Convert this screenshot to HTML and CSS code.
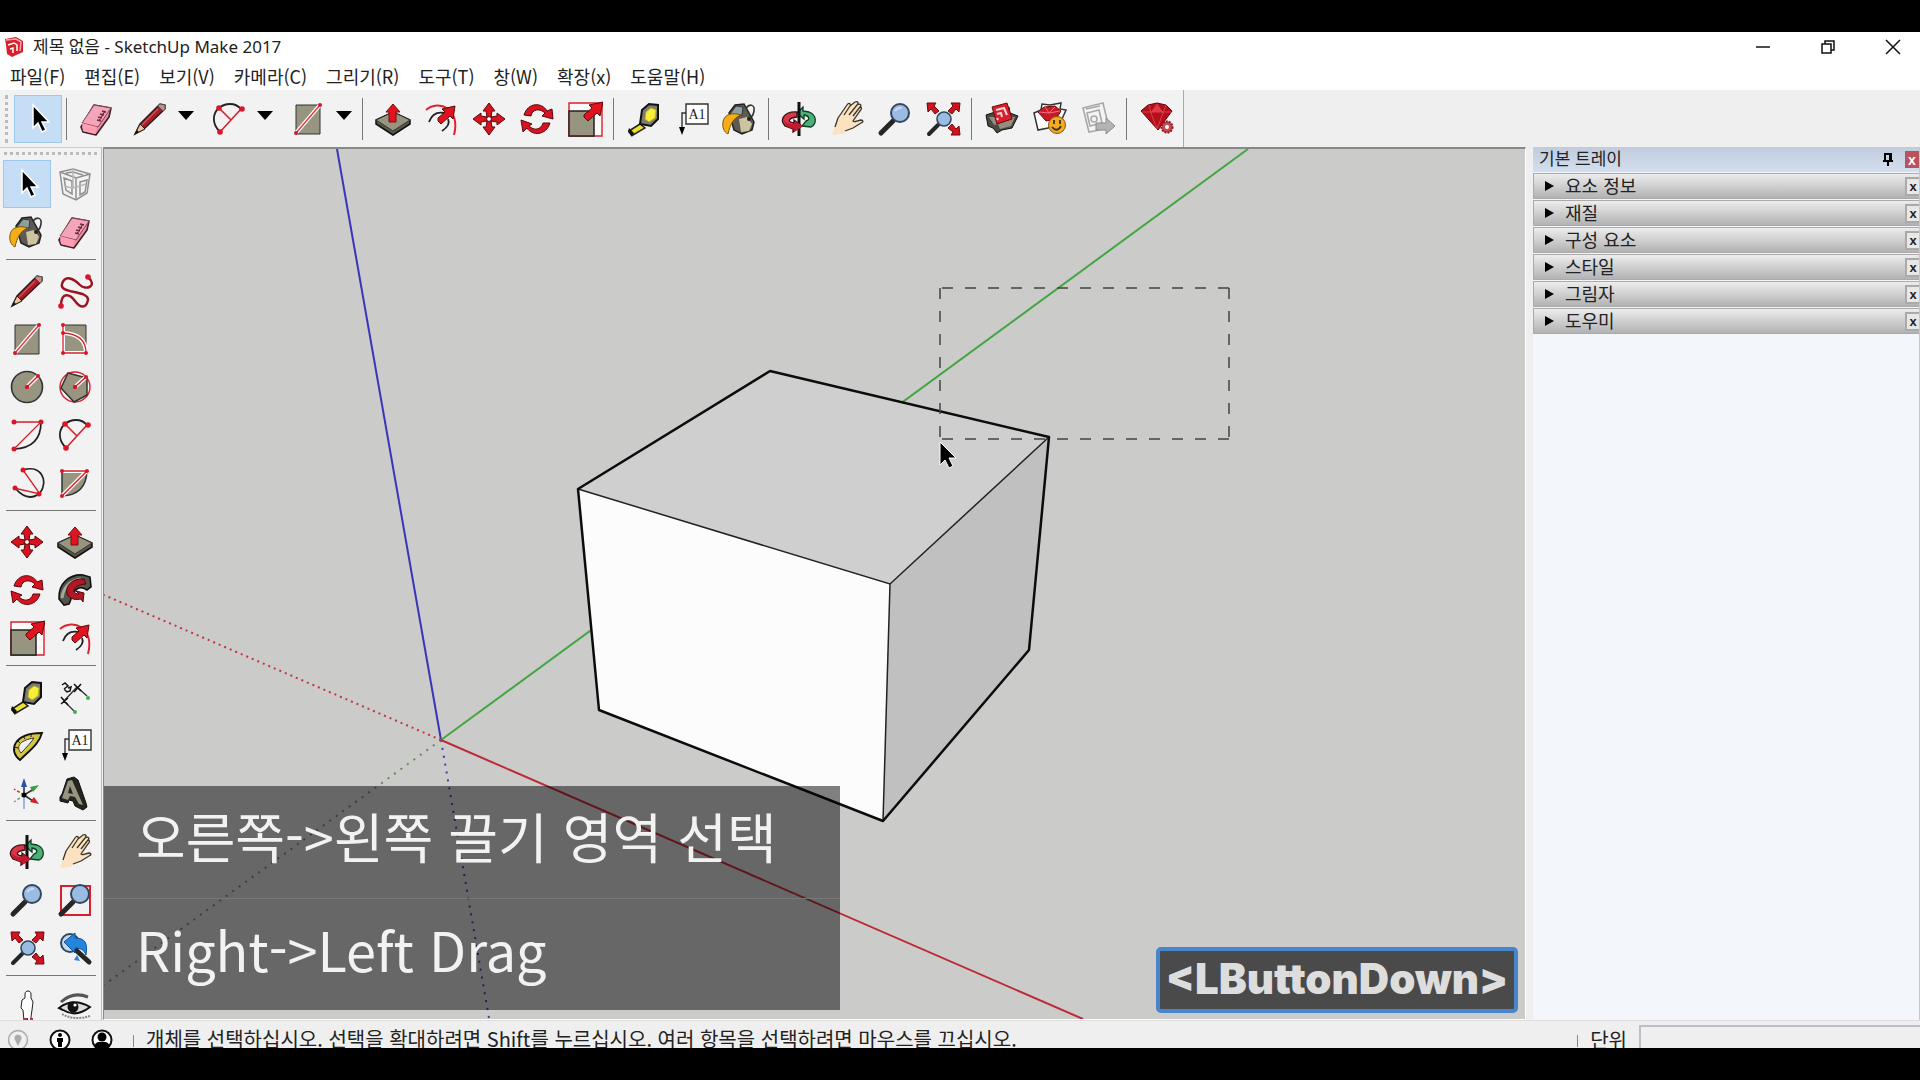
FILE: index.html
```html
<!DOCTYPE html>
<html lang="ko">
<head>
  <meta charset="UTF-8">
  <meta name="viewport" content="width=device-width, initial-scale=1.0">
  <title>제목 없음 - SketchUp Make 2017</title>
  <link rel="stylesheet" href="styles.css">
</head>
<body>
  <!-- Icon set, every symbol sits on a 36 x 36 grid -->
  <svg class="sprite" aria-hidden="true">
    <symbol id="i-select" viewBox="0 0 36 36">
      <path d="M13 4v23l5-5 4 9 4-2-4-8h7z" fill="#000" stroke="#fff" stroke-width="1.5"/>
    </symbol>
    <symbol id="i-eraser" viewBox="0 0 36 36">
      <path d="M2 26 15 4l17 3-2 9-13 18-13-3z" fill="#f08ba2" stroke="#3a2228" stroke-width="1.6" stroke-linejoin="round"/>
      <path d="M3 22 15 4l17 3-13 19z" fill="#f4a5b9" stroke="#7d4453"/>
      <path d="m3 22 15 4-2 7-12-3z" fill="#ff9db2"/>
      <path d="m18 19 4 1m-3-4 4 1m-2-4 4 1m-2-4 4 1m-7 9 6-10" stroke="#6b2b3c" stroke-width="1.3" fill="none"/>
    </symbol>
    <symbol id="i-pencil" viewBox="0 0 36 36">
      <path d="M3 33 8 23 28 3l5 1v4L12 28z" fill="#a91d27" stroke="#2a1a1a" stroke-width="1.4"/>
      <path d="m3 33 5-10 5 5z" fill="#e5c79b" stroke="#2a1a1a"/>
      <path d="m3 33 2-4 2 2z" fill="#111"/>
      <path d="m26 5 2-2 5 1v4l-2 2z" fill="#c98a90" stroke="#555"/>
      <path d="m10 24 16-16" stroke="#d64f57" stroke-width="1.5"/>
    </symbol>
    <symbol id="i-freehand" viewBox="0 0 36 36">
      <path d="M4 33C4 18 13 21 18 28S29 36 31 27C32 17 2 21 5 11S17 6 23 12s18 1 8-8" fill="none" stroke="#9b1220" stroke-width="2.4"/>
      <g fill="#d81628"><circle cx="4" cy="33" r="2.8"/><circle cx="31" cy="4" r="2.8"/></g>
    </symbol>
    <symbol id="i-arc" viewBox="0 0 36 36">
      <path d="M9 31C0 22 2 12 8 7s16-6 22 1" fill="none" stroke="#222" stroke-width="1.8"/>
      <path d="M9 31 30 8M8 7l12 12" fill="none" stroke="#d6212d" stroke-width="1.6"/>
      <g fill="#d81628"><circle cx="8" cy="7" r="2.8"/><circle cx="31" cy="8" r="2.8"/><circle cx="9" cy="31" r="2.8"/></g>
    </symbol>
    <symbol id="i-rect" viewBox="0 0 36 36">
      <path d="M6 4h24v29H6z" fill="#97947f" stroke="#333"/>
      <path d="M6 32 30 4" stroke="#fff" stroke-width="4"/>
      <path d="M6 32 30 4" stroke="#e03c46" stroke-width="1.5"/>
      <g fill="#d81628"><circle cx="6" cy="32" r="2"/><circle cx="30" cy="4" r="2"/></g>
    </symbol>
    <symbol id="i-rotrect" viewBox="0 0 36 36">
      <path d="M6 4h23v28H6z" fill="#97947f" stroke="#333"/>
      <path d="M6 4v28h23q0-19-23-20" fill="none" stroke="#fff" stroke-width="4"/>
      <path d="M6 4v28h23q0-19-23-20" fill="none" stroke="#d6212d" stroke-width="1.3"/>
      <g fill="#d81628"><circle cx="6" cy="4" r="2"/><circle cx="6" cy="12" r="2"/><circle cx="6" cy="32" r="2"/><circle cx="29" cy="32" r="2"/></g>
    </symbol>
    <symbol id="i-circle" viewBox="0 0 36 36">
      <circle cx="18" cy="18" r="15.5" fill="#97947f" stroke="#333" stroke-width="1.6"/>
      <path d="M18 18 29 7" stroke="#fff" stroke-width="4"/><path d="M18 18 29 7" stroke="#d6212d" stroke-width="1.5"/>
      <g fill="#d81628"><circle cx="18" cy="18" r="2.2"/><circle cx="29" cy="7" r="2"/></g>
    </symbol>
    <symbol id="i-polygon" viewBox="0 0 36 36">
      <circle cx="18" cy="18" r="15" fill="none" stroke="#d6212d" stroke-width="1.4"/>
      <path d="m11 4 19 5v17l-13 7L4 19z" fill="#97947f" stroke="#333" stroke-width="1.5"/>
      <path d="M18 18 29 8" stroke="#fff" stroke-width="4"/><path d="M18 18 29 8" stroke="#d6212d" stroke-width="1.5"/>
      <g fill="#d81628"><circle cx="18" cy="18" r="2.2"/><circle cx="29" cy="8" r="2"/></g>
    </symbol>
    <symbol id="i-arc2" viewBox="0 0 36 36">
      <path d="M32 5q0 26-27 27" fill="none" stroke="#222" stroke-width="1.7"/>
      <path d="M5 5h27L5 32" fill="none" stroke="#d6212d" stroke-width="1.3"/>
      <g fill="#d81628"><circle cx="5" cy="5" r="2.5"/><circle cx="32" cy="5" r="2.5"/><circle cx="5" cy="32" r="2.5"/></g>
    </symbol>
    <symbol id="i-arc3" viewBox="0 0 36 36">
      <path d="M14 5C32-1 40 16 31 28q-12 10-25-5" fill="none" stroke="#222" stroke-width="1.7"/>
      <path d="m14 5 17 24L5 23" fill="none" stroke="#d6212d" stroke-width="1.3"/>
      <g fill="#d81628"><circle cx="14" cy="5" r="2.5"/><circle cx="30" cy="29" r="2.5"/><circle cx="6" cy="23" r="2.5"/></g>
    </symbol>
    <symbol id="i-pie" viewBox="0 0 36 36">
      <path d="M5 6h25Q29 30 5 31z" fill="#97947f" stroke="#333" stroke-width="1.5"/>
      <path d="M5 31 30 6H5" fill="none" stroke="#fff" stroke-width="4"/>
      <path d="M5 31 30 6H5" fill="none" stroke="#d6212d" stroke-width="1.5"/>
      <g fill="#d81628"><circle cx="5" cy="6" r="2"/><circle cx="30" cy="6" r="2"/><circle cx="5" cy="31" r="2"/></g>
    </symbol>
    <symbol id="i-push" viewBox="0 0 36 36">
      <path d="m1 19 17-8 17 8v4L18 34 1 23z" fill="#56564a" stroke="#111" stroke-width="1.5"/>
      <path d="m1 19 17-8 17 8-17 11z" fill="#97947f" stroke="#333"/>
      <path d="M14 21V11h-3l7-8 7 8h-4v10z" fill="#e0141f" stroke="#7a0c12"/>
    </symbol>
    <symbol id="i-offset" viewBox="0 0 36 36">
      <path d="M3 9C16-2 38 8 31 34" fill="none" stroke="#dd2433" stroke-width="2"/>
      <path d="M6 21q4-11 15-9M25 18q3 6-6 12" fill="none" stroke="#222" stroke-width="1.8"/>
      <path d="m15 17 7-6-3-3 13-3-2 13-3-3-9 8-3-3z" fill="#e0141f" stroke="#5a080c"/>
    </symbol>
    <symbol id="i-move" viewBox="0 0 36 36">
      <path d="m18 2 6 8h-3l-1 6h-4l-1-6h-3z" fill="#d8121e" stroke="#5a080c"/>
      <path d="m18 34 6-8h-3l-1-6h-4l-1 6h-3zM2 18l8-6v3l6 1v4l-6 1v3zM34 18l-8-6v3l-6 1v4l6 1v3z" fill="#d8121e" stroke="#5a080c"/>
      <path d="m16 18 2-2 2 2-2 2z" fill="#fff"/>
    </symbol>
    <symbol id="i-rotate" viewBox="0 0 36 36">
      <path d="M5 14C9 1 23 1 28 10l5-2 1 10-11-3 3-3C21 7 13 8 12 15z" fill="#d8121e" stroke="#5a080c"/>
      <path d="M31 22C27 35 13 35 8 27l-4 4-2-12 11 4-3 2c5 5 12 4 14-3z" fill="#d8121e" stroke="#5a080c"/>
    </symbol>
    <symbol id="i-scale" viewBox="0 0 36 36">
      <path d="M2 2h33v33H2z" fill="#fff8f8" stroke="#d6212d" stroke-width="1.4"/>
      <path d="M2 10h25v25H2z" fill="#97947f" stroke="#222" stroke-width="1.5"/>
      <path d="m17 14 8-7-3-3 14-3-3 14-3-3-9 8-4-4z" fill="#e0141f" stroke="#5a080c"/>
    </symbol>
    <symbol id="i-follow" viewBox="0 0 36 36">
      <path d="M2 27C1 11 13 2 26 3l7 2 1 10-4 3q-6-4-10-1c-6 4-5 10-8 15l-5 1z" fill="#55544c" stroke="#111" stroke-width="1.6"/>
      <path d="M5 26Q7 10 24 7" fill="none" stroke="#aaa89a" stroke-width="3"/>
      <path d="M27 7C15 6 8 14 10 22c3 6 10 6 14 5l2 3 1-9-8-2 3 3c-8 0-7-9 7-10z" fill="#b31724" stroke="#4a070b"/>
    </symbol>
    <symbol id="i-tape" viewBox="0 0 36 36">
      <path d="m14 23 5 4-12 7-4-4z" fill="#efe32a" stroke="#222" stroke-width="1.5"/>
      <path d="m3 27 5 5-2 4-4-5z" fill="#111"/>
      <path d="m16 9 7-6 9 1v14l-7 7-11-2z" fill="#7b7b73" stroke="#111" stroke-width="2"/>
      <path d="m20 11 5-4 5 2-1 8-6 4-4-3z" fill="#f7ee38" stroke="#c0b71b"/>
    </symbol>
    <symbol id="i-dimension" viewBox="0 0 36 36">
      <path d="m7 22 13-14M7 22l10 10M20 8l10 9" stroke="#333" stroke-width="1.4"/>
      <path d="m4 18 7 8m-7-1 7-6m6-14 7 7m-7 1 7-8M5 6l3-2 3 3-4 3m4-1 3-1-1 4-3 1-3-3" fill="none" stroke="#111" stroke-width="1.5"/>
      <circle cx="18" cy="33" r="2" fill="#3fb24a"/><circle cx="31" cy="19" r="2" fill="#3fb24a"/>
    </symbol>
    <symbol id="i-protractor" viewBox="0 0 36 36">
      <path d="M11 33C-1 24 4 6 33 6 30 17 21 23 11 33z" fill="#d5c544" stroke="#111" stroke-width="1.8"/>
      <path d="M12 26C6 19 12 13 25 11q-4 6-13 15z" fill="#f1f1f1" stroke="#333"/>
      <path d="m5 20 4 1M8 13l3 3m3-7 2 3m6-5v3" stroke="#111"/>
    </symbol>
    <symbol id="i-text" viewBox="0 0 36 36">
      <path d="M12 3h22v20H12z" fill="#fff" stroke="#333" stroke-width="1.4"/>
      <path d="M12 12H8v16" fill="none" stroke="#333" stroke-width="1.4"/><path d="M5 26h6l-3 8z"/>
      <text x="23" y="18" text-anchor="middle" class="glyph">A1</text>
    </symbol>
    <symbol id="i-axes" viewBox="0 0 36 36">
      <path d="M15 20v14" stroke="#9fb4de" stroke-width="2"/>
      <path d="M15 20 5 14" stroke="#d6212d" stroke-width="1.4" stroke-dasharray="3 2"/><path d="M15 20 5 27" stroke="#66a866" stroke-width="1.4" stroke-dasharray="3 2"/>
      <path d="M15 20V8m0 12 10-6M15 20l9 6" stroke="#333" stroke-width="1.6"/>
      <path d="m15 3-3 9h6z" fill="#2852a8"/><path d="m30 10-9 2 3 5z" fill="#3a9c46"/><path d="m30 29-5-7-4 5z" fill="#d6212d"/>
      <circle cx="15" cy="20" r="2.5"/>
    </symbol>
    <symbol id="i-3dtext" viewBox="0 0 36 36">
      <path d="m10 4 7-2 4 3 8 23 1 4-4 3-8-4-2-5-4-1-1 3-8-2v-4l2-3z" fill="#252520" stroke="#111"/>
      <path d="m11 6 4-1 11 25-4-1-4-7-5-1-2 4-6-2zM13 11l-2 7 5 1z" fill="#97947f" fill-rule="evenodd"/>
    </symbol>
    <symbol id="i-orbit" viewBox="0 0 36 36">
      <path d="M16 11C3 10-2 19 4 25l8 3v3l9-6-8-6v3c-7-1-6-5 3-6z" fill="#d8384a" stroke="#3d0b10" stroke-width="1.3"/>
      <path d="m21 25 9 1c6-3 6-12-2-15l-6-1V6l-6 6 7 6v-4c6 1 6 5 2 6z" fill="#4bb07a" stroke="#103a22" stroke-width="1.3"/>
      <path d="M18 1v34" stroke="#111" stroke-width="3"/>
      <path d="M3 19q3 5 11 4v-3l8 5-9 6v-3q-9-1-10-9z" fill="#c01a2c"/>
    </symbol>
    <symbol id="i-pan" viewBox="0 0 36 36">
      <path d="M3 34c2-5 3-10 6-17L18 4c2-3 4-1 3 1l5-4c3-1 4 1 2 3 3-2 5 0 3 2 2 0 2 2 0 4l-7 10c1 2 3 0 8-1 2 0 3 2 0 3l-8 5c-4 2-7 2-10 6z" fill="#fbe3c2"/>
      <path d="m9 17 9-13c2-3 4-1 3 1l-6 9m6-9 5-4c3-1 4 1 2 3l-8 10m8-10c3-2 5 0 3 2l-7 9m7-9c2 0 2 2 0 4l-7 10c1 2 3 0 8-1 2 0 3 2 0 3l-8 5-8 3M9 17 6 26" fill="none" stroke="#3d342a" stroke-width="1.3"/>
    </symbol>
    <symbol id="i-zoom" viewBox="0 0 36 36">
      <path d="M4 32 16 20" stroke="#262626" stroke-width="5" stroke-linecap="round"/>
      <circle cx="23" cy="12" r="9" fill="#9abce2" stroke="#34465d" stroke-width="2"/>
      <path d="M18 10q3-4 7-3" stroke="#c6dcf3" stroke-width="2" fill="none"/>
    </symbol>
    <symbol id="i-zoomwin" viewBox="0 0 36 36">
      <path d="M4 4h29v29H4z" fill="none" stroke="#d81f2c" stroke-width="2"/>
      <path d="M4 32 16 20" stroke="#262626" stroke-width="5" stroke-linecap="round"/>
      <circle cx="23" cy="12" r="9" fill="#9abce2" stroke="#34465d" stroke-width="2"/>
    </symbol>
    <symbol id="i-extents" viewBox="0 0 36 36">
      <path d="m4 33 9-9" stroke="#262626" stroke-width="4" stroke-linecap="round"/>
      <circle cx="19" cy="18" r="7" fill="#9abce2" stroke="#34465d" stroke-width="1.6"/>
      <path d="M2 2h9L9 5l5 5-4 3-4-5-3 3zM35 2h-9l2 3-5 5 4 3 4-5 3 3zM35 34h-9l2-3-5-4 4-4 4 5 3-3z" fill="#cf1420" stroke="#6d0a11"/>
    </symbol>
    <symbol id="i-previous" viewBox="0 0 36 36">
      <circle cx="13" cy="13" r="9" fill="#c4d9ee" stroke="#34465d" stroke-width="2"/>
      <path d="m7 12 11-9v5c10 0 13 5 11 17-2-5-5-7-11-7v5z" fill="#2485dc" stroke="#145295"/>
      <path d="m20 21 12 11" stroke="#262626" stroke-width="5" stroke-linecap="round"/>
      <path d="m17 30 3-5 3 6z" fill="#2485dc"/>
    </symbol>
    <symbol id="i-position" viewBox="0 0 36 36">
      <path d="M16 5c0-4 6-4 6 0v4l2 4-1 8-1 7v4h-3l-1-3-1 3h-2l-1-11-2-2 1-8 3-2z" fill="#fff" stroke="#222"/>
      <path d="M14 30h4m3 0h3" stroke="#b63848" stroke-width="2"/>
    </symbol>
    <symbol id="i-look" viewBox="0 0 36 36">
      <path d="M4 13Q16 2 31 8" fill="none" stroke="#555" stroke-width="3"/>
      <path d="M2 19Q16 8 33 18 19 29 6 21z" fill="#ddd" stroke="#111" stroke-width="2"/>
      <circle cx="16" cy="18" r="5.5" fill="#111"/><circle cx="18" cy="16" r="1.6" fill="#fff"/>
      <path d="M5 25q12 7 28 2" fill="none" stroke="#888" stroke-width="2" stroke-dasharray="2 1"/>
    </symbol>
    <symbol id="i-paint" viewBox="0 0 36 36">
      <path d="M24 7c4-5 9-3 8 3s-4 7-6 7" fill="none" stroke="#333" stroke-width="1.6"/>
      <path d="m7 12 6-8 9-1 10 18-2 8-10 4-8-4z" fill="#5e5a52" stroke="#222" stroke-width="1.5"/>
      <path d="m17 18 8-2 5 7-3 7-8 1z" fill="#ccc3a0"/>
      <path d="m8 13 6-8 7 1-1 8-7 2z" fill="#8aa0a3" stroke="#333"/>
      <path d="M19 14C11 11 2 13 1 21c-1 5 1 10 5 12 2-9 5-16 13-19z" fill="#f5ae18" stroke="#805508"/>
      <circle cx="27" cy="18" r="2" fill="#222"/>
    </symbol>
    <symbol id="i-component" viewBox="0 0 36 36">
      <g fill="none" stroke="#909090" stroke-width="1.5"><path d="m3 6 13-3 17 5-3 19-11 7L6 28z"/><path d="m3 6 16 6 14-4M19 12v22M7 12l8 3v13l-6-4zM23 16l7-2-2 12-5 3zM9 7l7-1 10 3"/><path d="m7 20 8 2 8-2 6-2M16 3v20" stroke="#b8b8b8"/></g>
    </symbol>
    <symbol id="i-warehouse" viewBox="0 0 36 36">
      <path d="m2 14 6-2 17-6 1 6 8 3-6 12-10 2-5 3-4-5-5-2z" fill="#4c4842" stroke="#111"/>
      <path d="m5 16 5 8 4-1 2 5 11-3 4-9" fill="#948d80"/>
      <path d="m8 6 15-4 5 16-15 5z" fill="#d8202c" stroke="#6b0a10"/>
      <path d="m12 9 8-2 3 7m-10-1 4-1 1 4m-5 1 1 2" fill="none" stroke="#ffd6d8" stroke-width="2"/>
    </symbol>
    <symbol id="i-share" viewBox="0 0 36 36">
      <path d="m2 12 7-3 1-6 8 1 11-2-1 6 6 1-4 9-14 9-10 2z" fill="#fff" stroke="#333" stroke-width="1.5"/>
      <path d="m6 11 6-5 11-1 6 5-5 8-10 2z" fill="#c81927" stroke="#6b0a10"/><path d="m7 11 10 1 11-2M13 6l4 6 6-6" fill="none" stroke="#ef737c"/>
      <circle cx="25" cy="24" r="8.5" fill="#f4ab1d" stroke="#865708"/>
      <path d="M22 19v4m6-4v4m-8 3q5 6 9-1" fill="none" stroke="#333" stroke-width="1.8"/>
    </symbol>
    <symbol id="i-send" viewBox="0 0 36 36">
      <g fill="#f4f4f4" stroke="#a9a9a9" stroke-width="1.6"><path d="m3 7 20-5 6 25-20 4z"/><path d="m7 12 12-3 3 13-12 3zM6 8l14-3"/><circle cx="14" cy="18" r="3"/></g>
      <path d="M16 22h10v-5l9 8-9 8v-4H16z" fill="#b4b4b4" stroke="#8c8c8c"/>
    </symbol>
    <symbol id="i-ruby" viewBox="0 0 36 36">
      <path d="m2 10 7-6 9-2 9 2 6 6-14 19z" fill="#b50f1c" stroke="#5e060d"/>
      <path d="m10 4 2 8 6-9 6 9 3-8M3 11h29M12 12l6 16 6-16" fill="none" stroke="#d8404b"/>
      <path d="m12 11 6-7 6 7z" fill="#e23b47"/>
      <circle cx="28" cy="26" r="5.5" fill="#c84a52" stroke="#8a1720" stroke-width="2" stroke-dasharray="2 1"/><circle cx="28" cy="26" r="2" fill="#fff"/>
    </symbol>
  </svg>

  <div class="app">
    <header class="titlebar">
      <svg class="logo" viewBox="0 0 18 20"><path d="m0 2 11-2 7 4v11l-11 5-5-3L1 8z" fill="#d8202b"/><path d="M1 3 11 2l5 3-1 9" fill="none" stroke="#f6a9ad" stroke-width="1.5"/><path d="m3 8 6-2 3 2v6M5 12l3-1v5" fill="none" stroke="#fff" stroke-width="1.5"/></svg>
      <h1>제목 없음 - SketchUp Make 2017</h1>
      <div class="window-buttons">
        <button aria-label="Minimize"><svg viewBox="0 0 16 16"><path d="M1 8h14"/></svg></button>
        <button aria-label="Restore"><svg viewBox="0 0 16 16"><path d="M2 5h9v9H2zM5 5V2h9v9h-3"/></svg></button>
        <button aria-label="Close"><svg viewBox="0 0 16 16"><path d="m1 1 14 14M15 1 1 15"/></svg></button>
      </div>
    </header>

    <nav class="menubar">
      <button>파일(F)</button>
      <button>편집(E)</button>
      <button>보기(V)</button>
      <button>카메라(C)</button>
      <button>그리기(R)</button>
      <button>도구(T)</button>
      <button>창(W)</button>
      <button>확장(x)</button>
      <button>도움말(H)</button>
    </nav>

    <div class="toolbar-row">
      <div class="toolbar">
        <span class="grip-v"></span>
        <button class="tool active" aria-label="Select"><svg><use href="#i-select"/></svg></button>
        <span class="sep-v"></span>
        <button class="tool" aria-label="Eraser"><svg><use href="#i-eraser"/></svg></button>
        <div class="combo"><button class="tool" aria-label="Line"><svg><use href="#i-pencil"/></svg></button><button class="drop" aria-label="Line tools"></button></div>
        <div class="combo"><button class="tool" aria-label="Arc"><svg><use href="#i-arc"/></svg></button><button class="drop" aria-label="Arc tools"></button></div>
        <div class="combo"><button class="tool" aria-label="Shape"><svg><use href="#i-rect"/></svg></button><button class="drop" aria-label="Shape tools"></button></div>
        <span class="sep-v"></span>
        <button class="tool" aria-label="Push/Pull"><svg><use href="#i-push"/></svg></button>
        <button class="tool" aria-label="Offset"><svg><use href="#i-offset"/></svg></button>
        <button class="tool" aria-label="Move"><svg><use href="#i-move"/></svg></button>
        <button class="tool" aria-label="Rotate"><svg><use href="#i-rotate"/></svg></button>
        <button class="tool" aria-label="Scale"><svg><use href="#i-scale"/></svg></button>
        <span class="sep-v"></span>
        <button class="tool" aria-label="Tape Measure"><svg><use href="#i-tape"/></svg></button>
        <button class="tool" aria-label="Text"><svg><use href="#i-text"/></svg></button>
        <button class="tool" aria-label="Paint Bucket"><svg><use href="#i-paint"/></svg></button>
        <span class="sep-v"></span>
        <button class="tool" aria-label="Orbit"><svg><use href="#i-orbit"/></svg></button>
        <button class="tool" aria-label="Pan"><svg><use href="#i-pan"/></svg></button>
        <button class="tool" aria-label="Zoom"><svg><use href="#i-zoom"/></svg></button>
        <button class="tool" aria-label="Zoom Extents"><svg><use href="#i-extents"/></svg></button>
        <span class="sep-v"></span>
        <button class="tool" aria-label="3D Warehouse"><svg><use href="#i-warehouse"/></svg></button>
        <button class="tool" aria-label="Share Model"><svg><use href="#i-share"/></svg></button>
        <button class="tool" aria-label="Send to LayOut"><svg><use href="#i-send"/></svg></button>
        <span class="sep-v"></span>
        <button class="tool" aria-label="Extension Warehouse"><svg><use href="#i-ruby"/></svg></button>
      </div>
    </div>

    <main class="workspace">
      <aside class="toolbox">
        <span class="grip-h"></span>
        <div class="tool-grid">
          <button class="tool active" aria-label="Select"><svg><use href="#i-select"/></svg></button>
          <button class="tool" aria-label="Make Component"><svg><use href="#i-component"/></svg></button>
          <button class="tool" aria-label="Paint Bucket"><svg><use href="#i-paint"/></svg></button>
          <button class="tool" aria-label="Eraser"><svg><use href="#i-eraser"/></svg></button>
          <span class="sep-h"></span>
          <button class="tool" aria-label="Line"><svg><use href="#i-pencil"/></svg></button>
          <button class="tool" aria-label="Freehand"><svg><use href="#i-freehand"/></svg></button>
          <button class="tool" aria-label="Rectangle"><svg><use href="#i-rect"/></svg></button>
          <button class="tool" aria-label="Rotated Rectangle"><svg><use href="#i-rotrect"/></svg></button>
          <button class="tool" aria-label="Circle"><svg><use href="#i-circle"/></svg></button>
          <button class="tool" aria-label="Polygon"><svg><use href="#i-polygon"/></svg></button>
          <button class="tool" aria-label="Arc"><svg><use href="#i-arc2"/></svg></button>
          <button class="tool" aria-label="2 Point Arc"><svg><use href="#i-arc"/></svg></button>
          <button class="tool" aria-label="3 Point Arc"><svg><use href="#i-arc3"/></svg></button>
          <button class="tool" aria-label="Pie"><svg><use href="#i-pie"/></svg></button>
          <span class="sep-h"></span>
          <button class="tool" aria-label="Move"><svg><use href="#i-move"/></svg></button>
          <button class="tool" aria-label="Push/Pull"><svg><use href="#i-push"/></svg></button>
          <button class="tool" aria-label="Rotate"><svg><use href="#i-rotate"/></svg></button>
          <button class="tool" aria-label="Follow Me"><svg><use href="#i-follow"/></svg></button>
          <button class="tool" aria-label="Scale"><svg><use href="#i-scale"/></svg></button>
          <button class="tool" aria-label="Offset"><svg><use href="#i-offset"/></svg></button>
          <span class="sep-h"></span>
          <button class="tool" aria-label="Tape Measure"><svg><use href="#i-tape"/></svg></button>
          <button class="tool" aria-label="Dimension"><svg><use href="#i-dimension"/></svg></button>
          <button class="tool" aria-label="Protractor"><svg><use href="#i-protractor"/></svg></button>
          <button class="tool" aria-label="Text"><svg><use href="#i-text"/></svg></button>
          <button class="tool" aria-label="Axes"><svg><use href="#i-axes"/></svg></button>
          <button class="tool" aria-label="3D Text"><svg><use href="#i-3dtext"/></svg></button>
          <span class="sep-h"></span>
          <button class="tool" aria-label="Orbit"><svg><use href="#i-orbit"/></svg></button>
          <button class="tool" aria-label="Pan"><svg><use href="#i-pan"/></svg></button>
          <button class="tool" aria-label="Zoom"><svg><use href="#i-zoom"/></svg></button>
          <button class="tool" aria-label="Zoom Window"><svg><use href="#i-zoomwin"/></svg></button>
          <button class="tool" aria-label="Zoom Extents"><svg><use href="#i-extents"/></svg></button>
          <button class="tool" aria-label="Previous"><svg><use href="#i-previous"/></svg></button>
          <span class="sep-h"></span>
          <button class="tool" aria-label="Position Camera"><svg><use href="#i-position"/></svg></button>
          <button class="tool" aria-label="Look Around"><svg><use href="#i-look"/></svg></button>
        </div>
      </aside>

      <section class="viewport">
        <svg class="scene" viewBox="104 149 1422 870" preserveAspectRatio="xMinYMin slice">
          <!-- axes -->
          <g fill="none" stroke-width="2">
            <path d="M441 740 337 149" stroke="#3a35b8"/>
            <path d="M441 740 489 1018" stroke="#3f3cb0" stroke-dasharray="2 6"/>
            <path d="M441 740 1248 149" stroke="#43a643"/>
            <path d="M441 740 104 985" stroke="#5f8f52" stroke-dasharray="2 6"/>
            <path d="m441 740 642 279" stroke="#bb2c38"/>
            <path d="M441 740 104 595" stroke="#c4343e" stroke-dasharray="2 4"/>
          </g>
          <!-- box -->
          <path d="m578 489 192-118 279 66-159 147z" fill="#cfcfcf"/>
          <path d="m578 489 312 95-7 237-284-111z" fill="#fcfcfc"/>
          <path d="m890 584 159-147-20 213-146 171z" fill="#c0c0c0"/>
          <path d="m578 489 312 95 159-147M890 584l-7 237" fill="none" stroke="#222" stroke-width="1.5"/>
          <path d="m578 489 192-118 279 66-20 213-146 171-284-111z" fill="none" stroke="#0c0c0c" stroke-width="2.5" stroke-linejoin="round"/>
          <!-- crossing selection -->
          <path d="M1229 288H940M1229 439H940M1229 288v151M940 288v151" fill="none" stroke="#444" stroke-width="1.5" stroke-dasharray="11 12"/>
          <path d="M940 442v23l5-5 4 8 4-2-4-8h7z" fill="#000" stroke="#fff"/>
        </svg>
        <div class="caption">
          <p>오른쪽-&gt;왼쪽 끌기 영역 선택</p>
          <p>Right-&gt;Left Drag</p>
        </div>
        <div class="keycast">&lt;LButtonDown&gt;</div>
      </section>

      <aside class="tray">
        <div class="tray-title">
          <h2>기본 트레이</h2>
          <button class="pin" aria-label="Pin"><svg viewBox="0 0 12 14"><path d="M3 1h6v7H3zM1 8h10M6 8v5M8 1v7" fill="none" stroke="#000" stroke-width="2"/></svg></button>
          <button class="tray-close" aria-label="Close tray">x</button>
        </div>
        <div class="panel"><button class="panel-name">요소 정보</button><button class="panel-close" aria-label="Close">x</button></div>
        <div class="panel"><button class="panel-name">재질</button><button class="panel-close" aria-label="Close">x</button></div>
        <div class="panel"><button class="panel-name">구성 요소</button><button class="panel-close" aria-label="Close">x</button></div>
        <div class="panel"><button class="panel-name">스타일</button><button class="panel-close" aria-label="Close">x</button></div>
        <div class="panel"><button class="panel-name">그림자</button><button class="panel-close" aria-label="Close">x</button></div>
        <div class="panel"><button class="panel-name">도우미</button><button class="panel-close" aria-label="Close">x</button></div>
      </aside>
    </main>

    <footer class="statusbar">
      <button class="status-icon" aria-label="Geo-location"><svg viewBox="0 0 22 22"><circle cx="11" cy="11" r="9.5" fill="none" stroke="#aaa" stroke-width="1.5"/><path d="M11 17 8 11c-3-7 9-7 6 0z" fill="#aaa"/></svg></button>
      <button class="status-icon" aria-label="Credits"><svg viewBox="0 0 22 22"><circle cx="11" cy="11" r="9.5" fill="#fff" stroke="#111" stroke-width="2"/><circle cx="11" cy="6" r="2"/><path d="M8 9h6v4h-1v5H9v-5H8z"/></svg></button>
      <button class="status-icon" aria-label="Sign in"><svg viewBox="0 0 22 22"><circle cx="11" cy="11" r="9.5" fill="#fff" stroke="#111" stroke-width="2"/><circle cx="11" cy="8" r="4.5"/><path d="M3 17q2-4 5-4h6q3 0 5 4l-4 4H7z"/></svg></button>
      <span class="divider"></span>
      <p>개체를 선택하십시오. 선택을 확대하려면 Shift를 누르십시오. 여러 항목을 선택하려면 마우스를 끄십시오.</p>
      <span class="divider"></span>
      <label for="measure">단위</label>
      <input type="text" id="measure">
    </footer>
  </div>
</body>
</html>
```
FILE: styles.css
```css
* {
  box-sizing: border-box;
}

body {
  margin: 0;
  height: 100vh;
  padding: 32px 0;
  background: #000;
  color: #222;
  font-family: "Noto Sans CJK KR", sans-serif;
  font-size: 18px;
  overflow: hidden;
}

h1, h2, p {
  margin: 0;
  font-weight: normal;
}

button {
  margin: 0;
  padding: 0;
  border: none;
  background: none;
  color: inherit;
  font: inherit;
}

.sprite {
  display: none;
}

.glyph {
  font: 14px "Liberation Serif", serif;
  fill: #222;
}

.app {
  display: flex;
  flex-direction: column;
  height: 100%;
  background: #efefef;
  overflow: hidden;
}

/* Title bar and menu */
.titlebar {
  display: flex;
  align-items: center;
  height: 30px;
  padding-left: 5px;
  background: #fff;
}

.logo {
  width: 18px;
  height: 20px;
  margin-right: 10px;
}

.titlebar h1 {
  flex: 1;
  font-family: "Noto Sans", "Noto Sans CJK KR", sans-serif;
  font-size: 17px;
  line-height: 30px;
}

.window-buttons {
  display: flex;
  gap: 11px;
}

.window-buttons button {
  width: 54px;
  height: 30px;
}

.window-buttons svg {
  width: 16px;
  height: 16px;
  fill: none;
  stroke: #111;
  stroke-width: 1.5;
}

.menubar {
  display: flex;
  gap: 19px;
  height: 28px;
  padding: 0 10px;
  background: #fff;
  line-height: 28px;
}

/* Toolbars */
.toolbar-row {
  display: flex;
  height: 57px;
}

.toolbar {
  display: flex;
  align-items: center;
  padding: 0 2px 0 5px;
  background: #f2f2f2;
  border-right: 1px solid #aaa;
}

.grip-v {
  width: 4px;
  height: 48px;
  margin-right: 5px;
  border-left: 3px dotted #bbb;
}

.tool {
  display: flex;
  align-items: center;
  justify-content: center;
  width: 48px;
  height: 48px;
}

.tool svg {
  width: 36px;
  height: 36px;
}

.tool.active {
  background: #c5def5;
  border: 1px solid #9cc8ee;
}

.sep-v {
  width: 1px;
  height: 42px;
  margin: 0 6px 0 4px;
  background: #777;
}

.combo {
  display: flex;
  align-items: center;
  padding: 0 2px 0 5px;
}

.drop {
  width: 24px;
  height: 48px;
}

.drop::before {
  content: "";
  display: block;
  width: 0;
  margin: 0 auto 6px;
  border: 8px solid transparent;
  border-top: 9px solid #000;
  border-bottom: none;
}

.workspace {
  display: flex;
  flex: 1;
  min-height: 0;
}

.toolbox {
  flex: none;
  width: 102px;
  padding: 4px 3px 0;
  background: #f2f2f2;
  border-top: 1px solid #ccc;
  border-right: 1px solid #bbb;
  overflow: hidden;
}

.grip-h {
  display: block;
  height: 8px;
  margin: 0 1px;
  border-top: 3px dotted #bbb;
}

.tool-grid {
  display: grid;
  grid-template-columns: 48px 48px;
}

.sep-h {
  grid-column: 1 / 3;
  height: 1px;
  margin: 3px 3px 7px;
  background: #777;
}

/* Drawing area */
.viewport {
  position: relative;
  flex: 1;
  margin-left: 1px;
  background: #cbcbca;
  border-top: 2px solid #888984;
  border-left: 1px solid #888984;
  border-right: 1px solid #fff;
  border-bottom: 1px solid #fff;
  overflow: hidden;
}

.scene {
  display: block;
  width: 100%;
  height: 100%;
}

.caption {
  position: absolute;
  left: 0;
  bottom: 9px;
  width: 736px;
  background: rgba(0, 0, 0, 0.49);
  color: #f2f2f2;
  font-size: 54px;
  font-weight: 300;
}

.caption p {
  height: 112px;
  padding-left: 32px;
  line-height: 100px;
  white-space: nowrap;
}

.caption p + p {
  border-top: 1px solid #777;
}

.keycast {
  position: absolute;
  right: 7px;
  bottom: 6px;
  width: 362px;
  height: 66px;
  border: 4px solid #4985cb;
  border-radius: 5px;
  background: #4a4a4a;
  color: #ddd;
  font: 900 42px/56px Inter, sans-serif;
  text-align: center;
}

/* Tray */
.tray {
  flex: none;
  width: 394px;
  padding-left: 7px;
  border-right: 1px solid #c5c8cc;
  background: #f3f6fb;
  background-clip: content-box;
  overflow: hidden;
}

.tray-title {
  display: flex;
  align-items: center;
  height: 25px;
  margin-bottom: 1px;
  padding-left: 6px;
  background: linear-gradient(#c0cbdc, #d3dfef);
}

.tray-title h2 {
  flex: 1;
  padding-bottom: 3px;
  font-size: 17px;
  line-height: 22px;
}

.pin {
  display: flex;
  margin-right: 11px;
}

.pin svg {
  width: 12px;
  height: 14px;
}

.tray-close {
  width: 14px;
  height: 17px;
  background: #b9525d;
  color: #fff;
  font: bold 14px/14px "Liberation Sans", sans-serif;
}

.panel {
  display: flex;
  justify-content: space-between;
  align-items: center;
  height: 26px;
  margin-bottom: 1px;
  border: 1px solid #aaa;
  border-right: none;
  background: linear-gradient(#ededed, #b2b2b2);
}

.panel-name {
  display: flex;
  align-items: center;
  padding: 0 0 3px 11px;
  line-height: 20px;
}

.panel-name::before {
  content: "";
  margin: 3px 11px 0 0;
  border: 5px solid transparent;
  border-left: 9px solid #000;
  border-right: none;
}

.panel-close {
  width: 14px;
  height: 19px;
  border: 2px solid #aaa;
  border-right: none;
  background: #e8e8e8;
  font: bold 13px/13px "Liberation Sans", sans-serif;
}

/* Status bar */
.statusbar {
  display: flex;
  align-items: flex-start;
  height: 28px;
  padding-left: 7px;
  border-top: 1px solid #ddd;
  overflow: hidden;
}

.status-icon {
  width: 22px;
  height: 22px;
  margin: 8px 20px 0 0;
}

.status-icon svg {
  display: block;
  width: 22px;
  height: 22px;
}

.divider {
  width: 1px;
  height: 12px;
  margin: 14px 12px 0 0;
  background: #888;
}

.statusbar p {
  flex: 1;
  font-size: 20px;
  line-height: 24px;
  padding-top: 6px;
}

.statusbar label {
  padding-top: 7px;
  font-size: 20px;
  line-height: 24px;
}

.statusbar input {
  width: 281px;
  height: 32px;
  margin: 4px 0 0 12px;
  border: 2px solid #b9bec9;
  border-right: none;
  background: #efefef;
}
```
